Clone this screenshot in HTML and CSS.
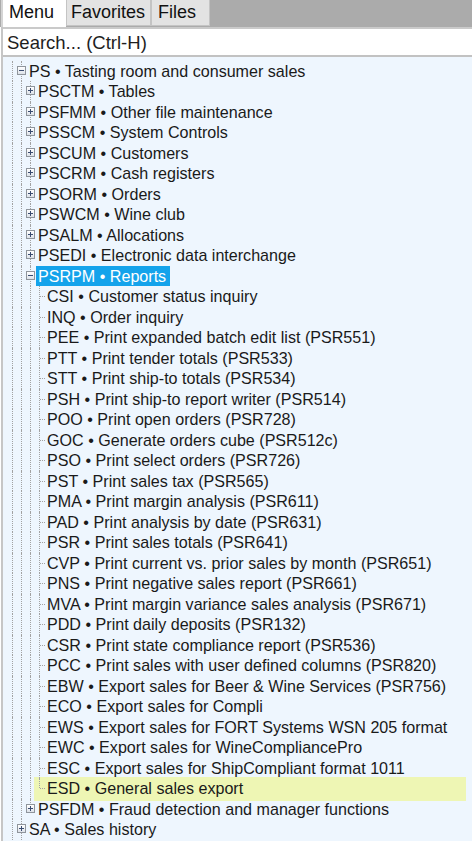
FILE: index.html
```html
<!DOCTYPE html>
<html>
<head>
<meta charset="utf-8">
<link rel="stylesheet" href="styles.css">
</head>
<body>
<div class="tabs">
  <div class="tab tab-active">Menu</div>
  <div class="tab tab-fav">Favorites</div>
  <div class="tab tab-files">Files</div>
</div>
<div class="panel">
  <div class="search">Search... (Ctrl-H)</div>
  <div class="tree">
    <div class="row"><span class="g"></span><span class="b"><span class="box minus"></span></span><span class="lbl">PS • Tasting room and consumer sales</span></div>
    <div class="row"><span class="g"></span><span class="g"></span><span class="b"><span class="box plus"></span></span><span class="lbl">PSCTM • Tables</span></div>
    <div class="row"><span class="g"></span><span class="g"></span><span class="b"><span class="box plus"></span></span><span class="lbl">PSFMM • Other file maintenance</span></div>
    <div class="row"><span class="g"></span><span class="g"></span><span class="b"><span class="box plus"></span></span><span class="lbl">PSSCM • System Controls</span></div>
    <div class="row"><span class="g"></span><span class="g"></span><span class="b"><span class="box plus"></span></span><span class="lbl">PSCUM • Customers</span></div>
    <div class="row"><span class="g"></span><span class="g"></span><span class="b"><span class="box plus"></span></span><span class="lbl">PSCRM • Cash registers</span></div>
    <div class="row"><span class="g"></span><span class="g"></span><span class="b"><span class="box plus"></span></span><span class="lbl">PSORM • Orders</span></div>
    <div class="row"><span class="g"></span><span class="g"></span><span class="b"><span class="box plus"></span></span><span class="lbl">PSWCM • Wine club</span></div>
    <div class="row"><span class="g"></span><span class="g"></span><span class="b"><span class="box plus"></span></span><span class="lbl">PSALM • Allocations</span></div>
    <div class="row"><span class="g"></span><span class="g"></span><span class="b"><span class="box plus"></span></span><span class="lbl">PSEDI • Electronic data interchange</span></div>
    <div class="row sel"><span class="g"></span><span class="g"></span><span class="b"><span class="box minus"></span></span><span class="lbl">PSRPM • Reports</span></div>
    <div class="row"><span class="g"></span><span class="g"></span><span class="g"></span><span class="c"></span><span class="lbl">CSI • Customer status inquiry</span></div>
    <div class="row"><span class="g"></span><span class="g"></span><span class="g"></span><span class="c"></span><span class="lbl">INQ • Order inquiry</span></div>
    <div class="row"><span class="g"></span><span class="g"></span><span class="g"></span><span class="c"></span><span class="lbl">PEE • Print expanded batch edit list (PSR551)</span></div>
    <div class="row"><span class="g"></span><span class="g"></span><span class="g"></span><span class="c"></span><span class="lbl">PTT • Print tender totals (PSR533)</span></div>
    <div class="row"><span class="g"></span><span class="g"></span><span class="g"></span><span class="c"></span><span class="lbl">STT • Print ship-to totals (PSR534)</span></div>
    <div class="row"><span class="g"></span><span class="g"></span><span class="g"></span><span class="c"></span><span class="lbl">PSH • Print ship-to report writer (PSR514)</span></div>
    <div class="row"><span class="g"></span><span class="g"></span><span class="g"></span><span class="c"></span><span class="lbl">POO • Print open orders (PSR728)</span></div>
    <div class="row"><span class="g"></span><span class="g"></span><span class="g"></span><span class="c"></span><span class="lbl">GOC • Generate orders cube (PSR512c)</span></div>
    <div class="row"><span class="g"></span><span class="g"></span><span class="g"></span><span class="c"></span><span class="lbl">PSO • Print select orders (PSR726)</span></div>
    <div class="row"><span class="g"></span><span class="g"></span><span class="g"></span><span class="c"></span><span class="lbl">PST • Print sales tax (PSR565)</span></div>
    <div class="row"><span class="g"></span><span class="g"></span><span class="g"></span><span class="c"></span><span class="lbl">PMA • Print margin analysis (PSR611)</span></div>
    <div class="row"><span class="g"></span><span class="g"></span><span class="g"></span><span class="c"></span><span class="lbl">PAD • Print analysis by date (PSR631)</span></div>
    <div class="row"><span class="g"></span><span class="g"></span><span class="g"></span><span class="c"></span><span class="lbl">PSR • Print sales totals (PSR641)</span></div>
    <div class="row"><span class="g"></span><span class="g"></span><span class="g"></span><span class="c"></span><span class="lbl">CVP • Print current vs. prior sales by month (PSR651)</span></div>
    <div class="row"><span class="g"></span><span class="g"></span><span class="g"></span><span class="c"></span><span class="lbl">PNS • Print negative sales report (PSR661)</span></div>
    <div class="row"><span class="g"></span><span class="g"></span><span class="g"></span><span class="c"></span><span class="lbl">MVA • Print margin variance sales analysis (PSR671)</span></div>
    <div class="row"><span class="g"></span><span class="g"></span><span class="g"></span><span class="c"></span><span class="lbl">PDD • Print daily deposits (PSR132)</span></div>
    <div class="row"><span class="g"></span><span class="g"></span><span class="g"></span><span class="c"></span><span class="lbl">CSR • Print state compliance report (PSR536)</span></div>
    <div class="row"><span class="g"></span><span class="g"></span><span class="g"></span><span class="c"></span><span class="lbl">PCC • Print sales with user defined columns (PSR820)</span></div>
    <div class="row"><span class="g"></span><span class="g"></span><span class="g"></span><span class="c"></span><span class="lbl">EBW • Export sales for Beer &amp; Wine Services (PSR756)</span></div>
    <div class="row"><span class="g"></span><span class="g"></span><span class="g"></span><span class="c"></span><span class="lbl">ECO • Export sales for Compli</span></div>
    <div class="row"><span class="g"></span><span class="g"></span><span class="g"></span><span class="c"></span><span class="lbl">EWS • Export sales for FORT Systems WSN 205 format</span></div>
    <div class="row"><span class="g"></span><span class="g"></span><span class="g"></span><span class="c"></span><span class="lbl">EWC • Export sales for WineCompliancePro</span></div>
    <div class="row"><span class="g"></span><span class="g"></span><span class="g"></span><span class="c"></span><span class="lbl">ESC • Export sales for ShipCompliant format 1011</span></div>
    <div class="row hov"><span class="g"></span><span class="g"></span><span class="g"></span><span class="c last"></span><span class="lbl">ESD • General sales export</span></div>
    <div class="row"><span class="g"></span><span class="g"></span><span class="b last"><span class="box plus"></span></span><span class="lbl">PSFDM • Fraud detection and manager functions</span></div>
    <div class="row"><span class="g"></span><span class="b"><span class="box plus"></span></span><span class="lbl">SA • Sales history</span></div>
  </div>
</div>
</body>
</html>
```
FILE: styles.css
```css
* { box-sizing: border-box; }

body {
  margin: 0;
  width: 472px;
  height: 843px;
  overflow: hidden;
  background: #fff;
  font-family: "Liberation Sans", Arial, sans-serif;
  color: #1a1a1a;
}

.tabs {
  display: flex;
  height: 27px;
  background: #ababab;
}

.tab {
  height: 26px;
  font-size: 18px;
  line-height: 25px;
  color: #111;
  background: #e3e3e3;
  border: 1px solid #c4c4c4;
  border-top: 0;
  white-space: nowrap;
}

.tab-active {
  width: 65px;
  height: 27px;
  margin-left: 1px;
  padding-left: 6px;
  background: #fff;
  border: 0;
  border-left: 2px solid #d4d4d4;
}

.tab-fav {
  width: 85px;
  padding-left: 4px;
}

.tab-files {
  width: 59px;
  padding-left: 6px;
}

.panel {
  margin-left: 1px;
  border-left: 2px solid #c6c6c6;
}

.search {
  height: 30px;
  border-top: 2px solid #cacaca;
  border-bottom: 2px solid #c2c2c2;
  background: #fff;
  padding-left: 4px;
  padding-top: 1px;
  font-size: 18.5px;
  line-height: 25px;
  color: #1e1e1e;
}

.tree {
  position: relative;
  z-index: 0;
  background: #eef6fe;
  padding: 3.5px 0 1px 5px;
}

.row {
  position: relative;
  display: flex;
  height: 20.5px;
}

.g, .b, .c {
  position: relative;
  flex: none;
  width: 9px;
}

.g::before, .b::before, .c::before {
  content: "";
  position: absolute;
  left: 4px;
  top: 0;
  bottom: 0;
  border-left: 1px dotted #a2a2a2;
}

.b.last::before, .c.last::before {
  bottom: 50%;
}

.c::after {
  content: "";
  position: absolute;
  left: 5px;
  top: 10px;
  width: 5px;
  border-top: 1px dotted #a2a2a2;
}

.b {
  display: flex;
  align-items: center;
}

.box {
  position: relative;
  width: 9px;
  height: 9px;
  margin-top: -1px;
  border: 1px solid #8f959c;
  background: linear-gradient(#ffffff, #dde2e9);
}

.box::before {
  content: "";
  position: absolute;
  left: 1px;
  top: 3px;
  width: 5px;
  height: 1px;
  background: #3a4c70;
}

.box.plus::after {
  content: "";
  position: absolute;
  left: 3px;
  top: 1px;
  width: 1px;
  height: 5px;
  background: #3a4c70;
}

.lbl {
  position: relative;
  margin-left: 1px;
  padding: 0 4px 0 2px;
  font-size: 16.1px;
  line-height: 20.5px;
  white-space: nowrap;
}

.sel .lbl {
  background: #14a3eb;
  color: #fff;
}

.hov::before {
  content: "";
  position: absolute;
  z-index: -1;
  left: 26px;
  right: 6px;
  top: -1px;
  height: 24px;
  background: #eef6b4;
}
```
